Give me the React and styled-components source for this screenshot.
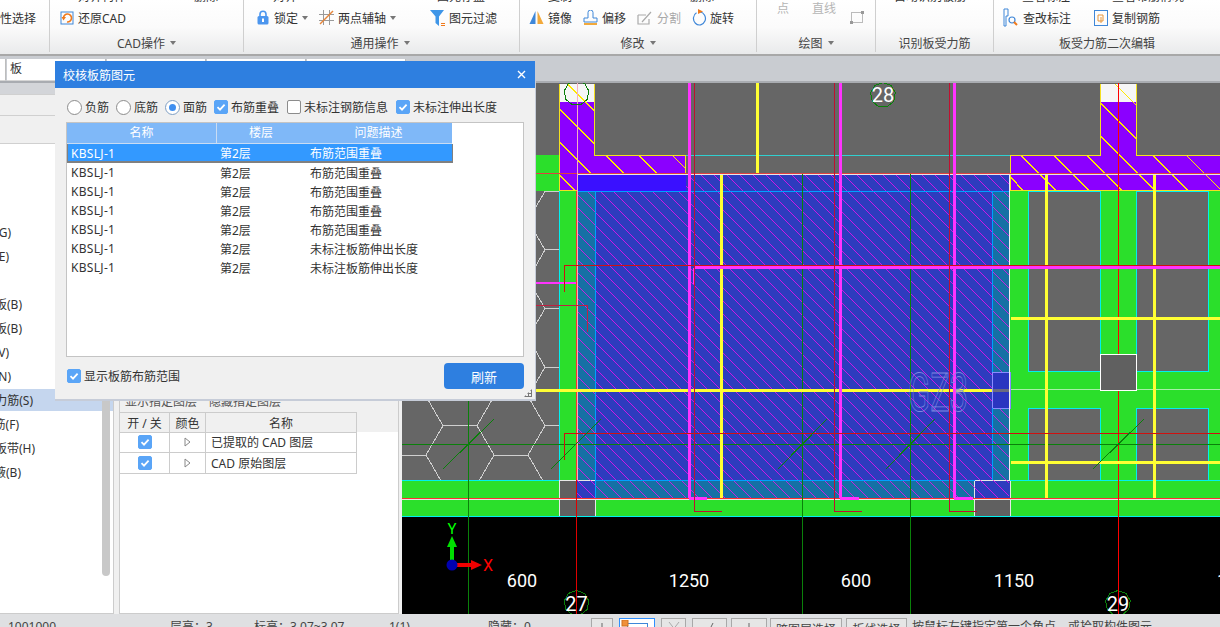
import React from "react";
import styled, { createGlobalStyle } from "styled-components";

const Global = createGlobalStyle`
  html, body { margin: 0; padding: 0; background: #f0f0f0; overflow: hidden; }
  * { box-sizing: border-box; }
  body { font-family: "Noto Sans", "Noto Sans CJK SC", sans-serif; font-size: 12px; color: #333; }
`;

const Page = styled.div`
  width: 1220px;
  height: 627px;
  overflow: hidden;
  position: relative;
  display: flex;
  flex-direction: column;
`;

/* ribbon */
const Ribbon = styled.div`
  height: 56px;
  display: flex;
  flex: none;
  background: linear-gradient(#ffffff, #fbfbfb 50%, #e9eaeb);
  border-bottom: 2px solid #a8a8a8;
`;

const Group = styled.div`
  width: ${(p) => p.$w}px;
  flex: none;
  height: 52px;
  display: flex;
  flex-direction: column;
  border-right: 1px solid #cfcfcf;
  &:last-child { border-right: 0; flex: 1; }
`;

const TopClip = styled.div`
  height: 3px;
  overflow: hidden;
  display: flex;
  flex: none;
  color: #444;
`;

const Clipped = styled.span`
  margin-left: ${(p) => p.$ml}px;
  margin-top: -9px;
  line-height: 12px;
  white-space: nowrap;
  color: ${(p) => p.$color || "#333"};
`;

const Tools = styled.div`
  height: 29px;
  flex: none;
  display: flex;
  align-items: center;
`;

const Tool = styled.div`
  margin-left: ${(p) => p.$ml}px;
  display: flex;
  align-items: center;
  gap: ${(p) => p.$gap ?? 4}px;
  white-space: nowrap;
  color: ${(p) => (p.$off ? "#a8a8a8" : "#333")};
`;

const Faint = styled.span`
  margin-left: ${(p) => p.$ml}px;
  margin-top: -19px;
  color: #b5b5b5;
`;

const Caret = styled.i`
  width: 0;
  height: 0;
  margin-left: ${(p) => p.$ml ?? 5}px;
  border-left: 3.5px solid transparent;
  border-right: 3.5px solid transparent;
  border-top: 4px solid #777;
`;

const GroupLabel = styled.div`
  flex: 1;
  display: flex;
  align-items: center;
  justify-content: center;
  padding-top: 2px;
  padding-right: ${(p) => p.$pr || 0}px;
  color: #444;
`;

/* input bar */
const SubBar = styled.div`
  height: 27px;
  flex: none;
  background: #c9ccd1;
  border-bottom: 2px solid #a9acb1;
  padding-top: 3px;
  display: flex;
  align-items: flex-start;
`;

const Cell = styled.div`
  width: ${(p) => p.$w}px;
  height: 22px;
  background: #fff;
  border-right: 1px solid #bdbdbd;
  border-bottom: 1px solid #d6d6d6;
  margin-right: ${(p) => p.$gap || 0}px;
  padding-left: 3px;
  line-height: 20px;
`;

/* main */
const Main = styled.div`
  height: 531px;
  flex: none;
  display: flex;
  background: #f0f0f0;
`;

const LeftPanel = styled.div`
  width: 114px;
  flex: none;
  background: #fff;
  border-right: 1px solid #ccc;
  border-bottom: 1px solid #ccc;
  overflow: hidden;
  position: relative;
`;

const Band = styled.div`
  height: ${(p) => p.$h}px;
  background: ${(p) => p.$bg};
  border-bottom: 1px solid #d0d0d0;
`;

const TreeList = styled.div`
  padding-top: 76px;
`;

const TreeRow = styled.div`
  height: ${(p) => (p.$sel ? 22 : 24)}px;
  margin: ${(p) => (p.$sel ? 1 : 0)}px 0;
  display: flex;
  justify-content: flex-end;
  align-items: center;
  width: ${(p) => (p.$sel ? 113 : p.$end)}px;
  padding-right: ${(p) => (p.$sel ? 113 - p.$end : 0)}px;
  white-space: nowrap;
  background: ${(p) => (p.$sel ? "#c5d6ee" : "transparent")};
  font-size: 12px;
  color: #333;
`;

const Scroll = styled.div`
  position: absolute;
  left: 102px;
  top: 130px;
  width: 8px;
  height: 363px;
  border-radius: 4px;
  background: #c8c8c8;
`;

const MidPanel = styled.div`
  width: 280px;
  margin-left: 5px;
  flex: none;
  background: #fff;
  border-left: 1px solid #ccc;
  border-right: 1px solid #ccc;
  border-bottom: 1px solid #ccc;
`;

const MidTop = styled.div`
  height: 349px;
  background: #f0f0f0;
  padding-top: 311px;
`;

const Caption = styled.div`
  height: 18px;
  line-height: 16px;
  padding-left: 5px;
  white-space: nowrap;
  color: #555;
`;

const LayerRow = styled.div`
  display: grid;
  grid-template-columns: 50px 36px 151px;
  height: ${(p) => p.$h || 21}px;
  width: 237px;
`;

const LayerCell = styled.div`
  display: flex;
  align-items: center;
  justify-content: ${(p) => (p.$left ? "flex-start" : "center")};
  padding-left: ${(p) => (p.$left ? 5 : 0)}px;
  border-right: 1px solid #ccc;
  border-top: ${(p) => (p.$head ? "1px solid #ccc" : 0)};
  border-bottom: 1px solid #ccc;
  white-space: pre;
`;

const Canvas = styled.div`
  margin-left: 3px;
  width: 818px;
  height: 531px;
  flex: none;
  background: #000;
`;

const DimText = styled.text`
  font-family: "Liberation Sans Narrow", "Roboto", sans-serif;
  font-size: ${(p) => p.$size || 18}px;
  fill: ${(p) => p.$fill || "#fff"};
  text-anchor: middle;
`;

/* status */
const Status = styled.div`
  flex: none;
  height: 13px;
  background: #dfe0e2;
  display: flex;
  overflow: hidden;
  position: relative;
  white-space: nowrap;
  color: #444;
`;

const StatusText = styled.span`
  flex: none;
  width: ${(p) => p.$w}px;
  margin-left: ${(p) => p.$ml || 0}px;
  margin-top: 3px;
  line-height: 20px;
`;

const StatusBtn = styled.div`
  width: ${(p) => p.$w}px;
  margin-left: ${(p) => p.$ml}px;
  margin-top: 4px;
  height: 20px;
  flex: none;
  background: ${(p) => (p.$on ? "#fff" : "#e6e6e6")};
  border: 1px solid ${(p) => (p.$on ? "#2e8fff" : "#a9a9a9")};
  text-align: center;
  line-height: 18px;
  padding-top: 2px;
  color: #444;
  display: flex;
  justify-content: center;
`;

/* dialog */
const Dialog = styled.div`
  position: absolute;
  left: 55px;
  top: 61px;
  width: 481px;
  height: 340px;
  background: #f0f0f0;
  border-right: 1px solid #c6ccd8;
  border-bottom: 2px solid #c6ccd8;
  display: flex;
  flex-direction: column;
`;

const TitleBar = styled.div`
  height: 27px;
  flex: none;
  background: #2e7fe0;
  color: #fff;
  display: flex;
  align-items: center;
  justify-content: space-between;
  padding: 0 9px 0 8px;
`;

const Options = styled.div`
  height: 34px;
  flex: none;
  display: flex;
  align-items: center;
  padding: 4px 0 0 12px;
`;

const Option = styled.label`
  display: flex;
  align-items: center;
  gap: 3px;
  margin-right: ${(p) => p.$mr}px;
  white-space: nowrap;
`;

const Radio = styled.span`
  width: 15px;
  height: 15px;
  flex: none;
  border-radius: 50%;
  background: #fff;
  border: 1px solid ${(p) => (p.$on ? "#7f9fc4" : "#8c8c8c")};
  display: flex;
  align-items: center;
  justify-content: center;
  &::after {
    content: "";
    width: 7px;
    height: 7px;
    border-radius: 50%;
    background: ${(p) => (p.$on ? "#3f8ff0" : "transparent")};
  }
`;

const CheckBox = styled.span`
  width: 14px;
  height: 14px;
  flex: none;
  border-radius: 2px;
  background: ${(p) => (p.$on ? "#5aa5f7" : "#fff")};
  border: 1px solid ${(p) => (p.$on ? "#5aa5f7" : "#8c8c8c")};
  display: flex;
  align-items: center;
  justify-content: center;
`;

const TableBox = styled.div`
  margin: 0 11px 0 11px;
  height: 235px;
  flex: none;
  background: #fff;
  border: 1px solid #c4c4c4;
`;

const HeadRow = styled.div`
  width: 385px;
  height: 21px;
  display: grid;
  grid-template-columns: 150px 88px 147px;
  background: #7fb8f8;
  color: #fff;
  border-bottom: 1px solid #c9dcf3;
`;

const HeadCell = styled.div`
  text-align: center;
  line-height: 20px;
  border-right: ${(p) => (p.$sep ? "1px solid #c9dcf3" : 0)};
`;

const DataRow = styled.div`
  width: ${(p) => (p.$sel ? 386 : 385)}px;
  height: 19px;
  display: grid;
  grid-template-columns: 149px 90px 146px;
  align-items: center;
  padding-left: ${(p) => (p.$sel ? 3 : 4)}px;
  background: ${(p) => (p.$sel ? "#3399ff" : "transparent")};
  color: ${(p) => (p.$sel ? "#fff" : "#333")};
  border-left: ${(p) => (p.$sel ? "1px solid #808080" : 0)};
  border-right: ${(p) => (p.$sel ? "1px solid #808080" : 0)};
  border-bottom: ${(p) => (p.$sel ? "2px solid #808080" : 0)};
`;

const PartName = styled.span`
  letter-spacing: 0.3px;
`;

const Footer = styled.div`
  flex: 1;
  display: flex;
  justify-content: space-between;
  align-items: center;
  padding: 0 11px 4px 12px;
`;

const Refresh = styled.button`
  width: 80px;
  height: 26px;
  border: 0;
  border-radius: 4px;
  background: #2e7fe0;
  color: #fff;
  font: inherit;
  font-size: 13px;
`;

const Grip = styled.div`
  position: absolute;
  right: 3px;
  bottom: 2px;
  width: 8px;
  height: 8px;
  background:
    radial-gradient(circle, #777 1px, transparent 1.2px) 0 0 / 3px 3px;
  clip-path: polygon(100% 0, 100% 100%, 0 100%);
`;

/* small ribbon icons */
const Tick = () => (
  <svg width="10" height="10" viewBox="0 0 10 10">
    <path d="M1.5 5.2 L4 7.6 L8.6 2.6" fill="none" stroke="#fff" strokeWidth="1.8" />
  </svg>
);

const RestoreIcon = () => (
  <svg width="14" height="14" viewBox="0 0 14 14">
    <rect x="1" y="1" width="12" height="12" fill="none" stroke="#3f87d8" />
    <path d="M3.5 7 A4 4 0 1 1 7 11" fill="none" stroke="#f07a1c" strokeWidth="1.6" />
    <path d="M1.5 6 L6 6 L3.5 9.5 Z" fill="#f07a1c" />
  </svg>
);
const LockIcon = () => (
  <svg width="12" height="15" viewBox="0 0 12 15">
    <path d="M3 7 V4.2 A3 3 0 0 1 9 4.2 V7" fill="none" stroke="#4c96ee" strokeWidth="1.6" />
    <rect x="0.5" y="6" width="11" height="8.5" rx="1.5" fill="#4c96ee" />
    <rect x="5" y="8.5" width="2" height="3.5" fill="#fff" />
  </svg>
);
const AxisIcon = () => (
  <svg width="15" height="15" viewBox="0 0 15 15">
    <path d="M4.5 0 V15 M10.5 0 V15 M0 4.5 H15 M0 10.5 H15" stroke="#9a9a9a" />
    <path d="M1 14 L14 1" stroke="#e8863a" strokeWidth="1.4" />
  </svg>
);
const FilterIcon = () => (
  <svg width="17" height="16" viewBox="0 0 17 16">
    <path d="M0 0 H14 L9 6.5 V16 L5.5 13 V6.5 Z" fill="#3f96e8" />
    <path d="M11 13.5 H15 M11 15.5 H15" stroke="#f07a1c" />
  </svg>
);
const MirrorIcon = () => (
  <svg width="15" height="15" viewBox="0 0 15 15">
    <path d="M6.5 1 V14 H0.5 Z" fill="#3f87d8" />
    <path d="M8.5 1 V14 H14.5 Z" fill="#f2a93b" />
  </svg>
);
const OffsetIcon = () => (
  <svg width="15" height="15" viewBox="0 0 15 15">
    <path d="M5 1.5 A2.5 2.5 0 0 1 10 1.5 V7 H14 V11 H1 V7 H5 Z" transform="translate(0 1)" fill="none" stroke="#3f87d8" />
    <path d="M1 14 H14" stroke="#f2a93b" strokeWidth="2" />
  </svg>
);
const SplitIcon = () => (
  <svg width="16" height="15" viewBox="0 0 16 15">
    <path d="M1 5 H9 M1 5 V14 H12 V9 M5 12 L14 2" fill="none" stroke="#aaa" strokeWidth="1.2" />
  </svg>
);
const RotateIcon = () => (
  <svg width="15" height="17" viewBox="0 0 15 17">
    <path d="M8 3 A6 6.5 0 1 1 4.5 3.8" fill="none" stroke="#3f87d8" strokeWidth="1.2" />
    <path d="M6 0 L11 2.5 L6 5 Z" fill="#f07a1c" />
  </svg>
);
const QueryIcon = () => (
  <svg width="16" height="19" viewBox="0 0 16 19">
    <path d="M1 1 H5 V8 H3 V18 H1 Z" fill="none" stroke="#3f87d8" />
    <circle cx="9" cy="12" r="3" fill="none" stroke="#3f87d8" strokeWidth="1.2" />
    <path d="M11 14 L14 17" stroke="#f07a1c" strokeWidth="2" />
  </svg>
);
const CopyBarIcon = () => (
  <svg width="14" height="16" viewBox="0 0 14 16">
    <rect x="0.5" y="0.5" width="13" height="15" fill="none" stroke="#3f87d8" />
    <path d="M4 5 H9 V11 H4 Z M7 7 V13" fill="none" stroke="#e8963a" />
  </svg>
);
const RectIcon = () => (
  <svg width="14" height="13" viewBox="0 0 14 13">
    <rect x="1.5" y="1.5" width="11" height="10" fill="none" stroke="#bbb" />
    <path d="M0 10 H3 V13 H0 Z M11 0 H14 V3 H11 Z" fill="#999" />
  </svg>
);
const PlayIcon = () => (
  <svg width="7" height="10" viewBox="0 0 7 10">
    <path d="M1 1 L6 5 L1 9 Z" fill="#fff" stroke="#888" />
  </svg>
);
const CloseIcon = () => (
  <svg width="9" height="9" viewBox="0 0 9 9">
    <path d="M1 1 L8 8 M8 1 L1 8" stroke="#fff" strokeWidth="1.4" />
  </svg>
);
const ModeIcon = ({ d, c = "#666" }) => (
  <svg width="14" height="14" viewBox="0 0 14 14">
    <path d={d} fill="none" stroke={c} />
  </svg>
);
const PickIcon = () => (
  <svg width="32" height="12" viewBox="0 0 32 12" style={{ marginTop: -1 }}>
    <rect x="6.5" y="3.5" width="20" height="12" fill="none" stroke="#3f87d8" />
    <rect x="1" y="0" width="6" height="6" fill="#f0903a" stroke="#d07020" />
  </svg>
);

/* cad drawing helpers */
const hexPath = () => {
  const s = 34;
  const h = 29.3;
  let d = "";
  for (let c = -2; c < 6; c++) {
    for (let r = -8; r < 3; r++) {
      const cx = 460 + c * 51;
      const cy = 455 + r * 2 * h + (c % 2 !== 0 ? h : 0);
      d += `M${cx - s} ${cy} L${cx - s / 2} ${cy - h} L${cx + s / 2} ${cy - h} L${cx + s} ${cy} L${cx + s / 2} ${cy + h} L${cx - s / 2} ${cy + h} Z `;
    }
  }
  return d;
};

// 45 degree hatch: lines y - x = base + k, k stepping through from..to
const hatchPath = (base, step, top, bottom, from, to) => {
  let d = "";
  for (let k = from; k <= to; k += step) {
    const c = base + k;
    d += `M${top - c} ${top} L${bottom - c} ${bottom} `;
  }
  return d;
};

const ringPoints = (cx, cy) => {
  const pts = [];
  for (let i = 0; i < 9; i++) {
    const a = (i / 9) * Math.PI * 2 - Math.PI / 2;
    pts.push(`${(cx + 12.5 * Math.cos(a)).toFixed(1)},${(cy + 12.5 * Math.sin(a)).toFixed(1)}`);
  }
  return pts.join(" ");
};

const Ln = ({ x1, y1, x2, y2, c, w = 1 }) => <line x1={x1} y1={y1} x2={x2} y2={y2} stroke={c} strokeWidth={w} />;

const GREEN = "#2bdf2b";
const GRAY = "#666666";
const CYAN = "#00f0f0";
const RED = "#e00000";
const PINK = "#ff33ff";
const YEL = "#ffff33";
const DG = "#0a800a";

const CadDrawing = () => (
  <svg width="818" height="531" viewBox="402 83 818 531" shapeRendering="crispEdges" style={{ display: "block" }}>
    <defs>
      <clipPath id="hexClip">
        <rect x="402" y="191" width="157" height="289" />
      </clipPath>
      <clipPath id="magClip">
        <path d="M686 174 H1009 V498 H577 V191 H686 Z" />
      </clipPath>
      <clipPath id="yelLeft">
        <path d="M559 84 H595 V155 H686 V174 H577 V191 H559 Z" />
      </clipPath>
      <clipPath id="yelRight">
        <path d="M1010 155 H1100.5 V84 H1136.5 V155 H1220 V191 H1010 Z" />
      </clipPath>
    </defs>

    <rect x="402" y="83" width="818" height="434" fill={GRAY} />
    <rect x="402" y="517" width="818" height="97" fill="#000" />

    {/* green slabs */}
    <rect x="402" y="155" width="157" height="36" fill={GREEN} />
    <rect x="559" y="191" width="18" height="289" fill={GREEN} />
    <rect x="1010" y="191" width="210" height="325" fill={GREEN} />
    <rect x="402" y="480" width="818" height="37" fill={GREEN} />

    {/* hex infill */}
    <path d={hexPath()} fill="none" stroke="#cfcfcf" clipPath="url(#hexClip)" />

    {/* openings on the right */}
    <rect x="1028.5" y="191.5" width="72" height="180" fill={GRAY} stroke={CYAN} />
    <rect x="1136.5" y="191.5" width="72" height="180" fill={GRAY} stroke={CYAN} />
    <rect x="1028.5" y="408.5" width="72" height="72" fill={GRAY} stroke={CYAN} />
    <rect x="1136.5" y="408.5" width="72" height="72" fill={GRAY} stroke={CYAN} />
    <Ln x1="1010" y1="389.5" x2="1100" y2="389.5" c="#a8f0a8" />
    <Ln x1="1136" y1="389.5" x2="1220" y2="389.5" c="#a8f0a8" />

    {/* rebar range overlay */}
    <rect x="577" y="191" width="432" height="307" fill="#1570a5" />
    <rect x="595" y="191" width="397" height="289" fill="#2d3cbe" />
    <rect x="686" y="174" width="323" height="17" fill="#2d3cbe" />

    {/* columns */}
    <rect x="559" y="480.5" width="36" height="36" fill="#606060" stroke="#e8e8e8" />
    <rect x="974.5" y="480.5" width="36" height="36" fill="#606060" stroke="#e8e8e8" />
    <rect x="577" y="481" width="18" height="17" fill="#2d3cbe" />
    <rect x="975" y="481" width="35" height="17" fill="#2d3cbe" />
    <rect x="1100.5" y="354.5" width="36" height="36" fill="#606060" stroke="#fff" />

    {/* purple slab edge */}
    <rect x="559" y="84" width="36" height="18" fill="#f6f6f6" />
    <rect x="1101" y="84" width="36" height="18" fill="#f6f6f6" />
    <path d="M559 102 H595 V155 H686 V191 H559 Z" fill="#8b00ff" />
    <path d="M577 174 H686 V191 H577 Z" fill="#3a10ff" />
    <path d="M1010 155 H1100.5 V102 H1136.5 V155 H1220 V191 H1010 Z" fill="#8b00ff" />
    <path d={hatchPath(-451, 33, 84, 191, -99, 66)} stroke="#ffe800" strokeWidth="1.4" fill="none" clipPath="url(#yelLeft)" />
    <path d={hatchPath(-866, 33, 84, 191, -264, 99)} stroke="#ffe800" strokeWidth="1.4" fill="none" clipPath="url(#yelRight)" />
    <path d="M559.5 84 V190.5 H577 M685.5 174 V155.5 H594.5 V84" fill="none" stroke="#f4e020" />
    <path d="M1010.5 190.5 V155.5 H1100.5 V84 M1136.5 84 V155.5 H1220 M1010 190.5 H1220" fill="none" stroke="#f4e020" />

    {/* hatch */}
    <path d={hatchPath(-201, 13, 174, 498, -650, 130)} stroke="#f010f0" strokeWidth="0.8" fill="none" clipPath="url(#magClip)" />

    <rect x="992.5" y="372.5" width="18" height="36" fill="#2a35c0" stroke="#8a8aff" />
    <Ln x1="993" y1="390" x2="1010" y2="390" c="#6a6a80" w={3} />

    {/* outlines */}
    <Ln x1="686" y1="155.5" x2="1010" y2="155.5" c="#30d0d0" />
    <Ln x1="577" y1="191.5" x2="1010" y2="191.5" c="#00a0ff" />
    <Ln x1="559.5" y1="191" x2="559.5" y2="480" c={CYAN} />
    <Ln x1="595.5" y1="191" x2="595.5" y2="498" c="#00a0ff" />
    <Ln x1="992.5" y1="191" x2="992.5" y2="372" c="#00a0ff" />
    <Ln x1="992.5" y1="408" x2="992.5" y2="480" c="#00a0ff" />
    <Ln x1="1009.5" y1="174" x2="1009.5" y2="480" c="#f0f0f0" />
    <Ln x1="402" y1="480.5" x2="559" y2="480.5" c={CYAN} />
    <Ln x1="595" y1="480.5" x2="975" y2="480.5" c="#00a0ff" />
    <Ln x1="1010" y1="480.5" x2="1220" y2="480.5" c={CYAN} />
    <Ln x1="402" y1="516.5" x2="1220" y2="516.5" c={CYAN} />

    {/* axis lines */}
    <Ln x1="402" y1="173.5" x2="1220" y2="173.5" c="#e04040" />
    <Ln x1="577" y1="174.5" x2="1220" y2="174.5" c="#e8e8e8" />
    <Ln x1="402" y1="498.5" x2="1220" y2="498.5" c="#ff3030" />
    <Ln x1="402" y1="499.5" x2="1220" y2="499.5" c="#e8e8e8" />

    <Ln x1="468.5" y1="191" x2="468.5" y2="614" c={DG} />
    <Ln x1="802.5" y1="174" x2="802.5" y2="614" c={DG} />
    <Ln x1="910.5" y1="174" x2="910.5" y2="614" c={DG} />
    <Ln x1="402" y1="444.5" x2="1220" y2="444.5" c={DG} />

    <Ln x1="577.5" y1="83" x2="577.5" y2="480" c="#f4b0c0" />
    <Ln x1="576.5" y1="191" x2="576.5" y2="480" c="#ff3030" />
    <Ln x1="576.5" y1="480" x2="576.5" y2="614" c={RED} />
    <Ln x1="1118" y1="83" x2="1118" y2="354" c="#f00" w={1} />
    <Ln x1="1118" y1="391" x2="1118" y2="614" c="#f00" w={1} />

    {/* bars */}
    <Ln x1="536" y1="390" x2="992" y2="390" c={YEL} w={3} />
    <Ln x1="1011" y1="318" x2="1220" y2="318" c={YEL} w={3} />
    <Ln x1="1011" y1="462" x2="1220" y2="462" c={YEL} w={3} />
    <Ln x1="757.5" y1="83" x2="757.5" y2="173" c={YEL} w={3} />
    <Ln x1="721.5" y1="175" x2="721.5" y2="498" c={YEL} w={3} />
    <Ln x1="1046.5" y1="175" x2="1046.5" y2="498" c={YEL} w={3} />
    <Ln x1="1154.5" y1="175" x2="1154.5" y2="498" c={YEL} w={3} />

    <Ln x1="689.5" y1="83" x2="689.5" y2="498" c={PINK} w={3} />
    <Ln x1="840.5" y1="83" x2="840.5" y2="498" c={PINK} w={3} />
    <Ln x1="954.5" y1="83" x2="954.5" y2="498" c={PINK} w={3} />
    <Ln x1="689" y1="498" x2="707" y2="498" c={PINK} w={3} />
    <Ln x1="840" y1="498" x2="859" y2="498" c={PINK} w={3} />
    <Ln x1="954" y1="498" x2="973" y2="498" c={PINK} w={3} />
    <Ln x1="694" y1="267" x2="1220" y2="267" c={PINK} w={3} />
    <Ln x1="536" y1="282.5" x2="576" y2="282.5" c={PINK} w={2} />
    <Ln x1="694" y1="268" x2="694" y2="284" c={PINK} w={2} />

    {/* red bent bars */}
    <path d="M564.5 292 V265.5 H1220" fill="none" stroke="#d01010" />
    <path d="M564.5 460 V433.5 H1220" fill="none" stroke="#d01010" />
    <path d="M536 305.5 H587.5 V332" fill="none" stroke="#c02040" />
    <path d="M694.5 83 V511.5 H722" fill="none" stroke="#c01030" />
    <path d="M834.5 83 V511.5 H862" fill="none" stroke="#c01030" />
    <path d="M949.5 83 V511.5 H977" fill="none" stroke="#c01030" />

    {/* diagonal ticks */}
    <Ln x1="443" y1="469" x2="494" y2="419" c={DG} />
    <Ln x1="551" y1="469" x2="601" y2="419" c={DG} />
    <Ln x1="778" y1="469" x2="827" y2="419" c={DG} />
    <Ln x1="886" y1="469" x2="935" y2="419" c={DG} />
    <Ln x1="1093" y1="469" x2="1144" y2="419" c={DG} />

    {/* axis bubbles */}
    <polygon points={ringPoints(576.5, 93)} fill="none" stroke={DG} />
    <polygon points={ringPoints(883, 95)} fill={GRAY} stroke={DG} />
    <polygon points={ringPoints(576.5, 603)} fill="#000" stroke={DG} />
    <polygon points={ringPoints(1118, 603)} fill="#000" stroke={DG} />
    <Ln x1="576.5" y1="590" x2="576.5" y2="614" c={RED} />
    <Ln x1="1118" y1="590" x2="1118" y2="614" c="#f00" />
    <g shapeRendering="auto">
      <DimText x="883" y="102" $size={20}>28</DimText>
      <DimText x="576.5" y="611" $size={20}>27</DimText>
      <DimText x="1118" y="611" $size={20}>29</DimText>
      <DimText x="522" y="587">600</DimText>
      <DimText x="689" y="587">1250</DimText>
      <DimText x="856" y="587">600</DimText>
      <DimText x="1014" y="587">1150</DimText>
      <DimText x="1222" y="587">1</DimText>
      <text x="908" y="411" fontFamily="Liberation Sans Narrow, Roboto, sans-serif" fontSize="54" fill="none" stroke="#8088e0" strokeWidth="0.8" textLength="60" lengthAdjust="spacingAndGlyphs">GZ3</text>
      <DimText x="452" y="534" $size={15} $fill="#00ff00">Y</DimText>
      <DimText x="488" y="571" $size={16} $fill="#ff0000">X</DimText>
    </g>

    {/* ucs */}
    <rect x="450" y="546" width="4" height="20" fill="#00e000" />
    <path d="M452 536 L457 547 H447 Z" fill="#00e000" shapeRendering="auto" />
    <rect x="452" y="563" width="20" height="4" fill="#f00000" />
    <path d="M482 565 L471 560 V570 Z" fill="#f00000" shapeRendering="auto" />
    <circle cx="452" cy="565" r="5.5" fill="#0000b0" shapeRendering="auto" />
  </svg>
);

const rows = [
  ["KBSLJ-1", "第2层", "布筋范围重叠"],
  ["KBSLJ-1", "第2层", "布筋范围重叠"],
  ["KBSLJ-1", "第2层", "布筋范围重叠"],
  ["KBSLJ-1", "第2层", "布筋范围重叠"],
  ["KBSLJ-1", "第2层", "布筋范围重叠"],
  ["KBSLJ-1", "第2层", "未标注板筋伸出长度"],
  ["KBSLJ-1", "第2层", "未标注板筋伸出长度"],
];

const tree = [
  { text: "砌体加筋(G)", end: 11 },
  { text: "圈梁(E)", end: 9 },
  { text: "", end: 1 },
  { text: "现浇板(B)", end: 22 },
  { text: "螺旋板(B)", end: 22 },
  { text: "柱帽(V)", end: 9 },
  { text: "板洞(N)", end: 11 },
  { text: "板受力筋(S)", end: 33, sel: true },
  { text: "板负筋(F)", end: 19 },
  { text: "楼层板带(H)", end: 35 },
  { text: "板加腋(B)", end: 21 },
];

export default function App() {
  return (
    <Page>
      <Global />
      <Ribbon>
        <Group $w={50}>
          <TopClip />
          <Tools>
            <Tool $ml={-12}>属性选择</Tool>
          </Tools>
        </Group>
        <Group $w={194}>
          <TopClip>
            <Clipped $ml={28}>对齐构件</Clipped>
            <Clipped $ml={24} $color="#e8a070">▪</Clipped>
            <Clipped $ml={32}>删除</Clipped>
          </TopClip>
          <Tools>
            <Tool $ml={10} $gap={4}><RestoreIcon />还原CAD</Tool>
          </Tools>
          <GroupLabel>CAD操作<Caret /></GroupLabel>
        </Group>
        <Group $w={276}>
          <TopClip>
            <Clipped $ml={29}>对齐</Clipped>
            <Clipped $ml={140}>图元存盘</Clipped>
          </TopClip>
          <Tools>
            <Tool $ml={13} $gap={5}><LockIcon />锁定<Caret $ml={-1} /></Tool>
            <Tool $ml={11}><AxisIcon />两点辅轴<Caret $ml={0} /></Tool>
            <Tool $ml={34} $gap={2}><FilterIcon />图元过滤</Tool>
          </Tools>
          <GroupLabel $pr={3}>通用操作<Caret /></GroupLabel>
        </Group>
        <Group $w={237}>
          <TopClip>
            <Clipped $ml={28}>复制</Clipped>
            <Clipped $ml={118}>删除</Clipped>
          </TopClip>
          <Tools>
            <Tool $ml={9}><MirrorIcon />镜像</Tool>
            <Tool $ml={11}><OffsetIcon />偏移</Tool>
            <Tool $ml={11} $off><SplitIcon />分割</Tool>
            <Tool $ml={11} $gap={3}><RotateIcon />旋转</Tool>
          </Tools>
          <GroupLabel>修改<Caret /></GroupLabel>
        </Group>
        <Group $w={119}>
          <TopClip />
          <Tools>
            <Faint $ml={20}>点</Faint>
            <Faint $ml={23}>直线</Faint>
            <Tool $ml={14}><RectIcon /></Tool>
          </Tools>
          <GroupLabel>绘图<Caret /></GroupLabel>
        </Group>
        <Group $w={118}>
          <TopClip>
            <Clipped $ml={18}>自动识别板筋</Clipped>
          </TopClip>
          <Tools />
          <GroupLabel>识别板受力筋</GroupLabel>
        </Group>
        <Group $w={226}>
          <TopClip>
            <Clipped $ml={28}>查看标注</Clipped>
            <Clipped $ml={42}>查看布筋情况</Clipped>
          </TopClip>
          <Tools>
            <Tool $ml={9}><QueryIcon />查改标注</Tool>
            <Tool $ml={23}><CopyBarIcon />复制钢筋</Tool>
          </Tools>
          <GroupLabel>板受力筋二次编辑</GroupLabel>
        </Group>
      </Ribbon>

      <SubBar>
        <Cell $w={6} $gap={1} />
        <Cell $w={99} $gap={1}>板</Cell>
        <Cell $w={99} $gap={1} />
        <Cell $w={99} $gap={1} />
        <Cell $w={99} />
      </SubBar>

      <Main>
        <LeftPanel>
          <Band $h={12} $bg="#d3d5d9" />
          <Band $h={21} $bg="#f0f0f0" />
          <Band $h={28} $bg="#f0f0f0" />
          <TreeList>
            {tree.map((t, i) => (
              <TreeRow key={i} $end={t.end} $sel={t.sel}>{t.text}</TreeRow>
            ))}
          </TreeList>
          <Scroll />
        </LeftPanel>
        <MidPanel>
          <MidTop>
            <Caption>显示指定图层　隐藏指定图层</Caption>
            <LayerRow>
              <LayerCell $head>开 / 关</LayerCell>
              <LayerCell $head>颜色</LayerCell>
              <LayerCell $head>名称</LayerCell>
            </LayerRow>
          </MidTop>
          <LayerRow>
            <LayerCell><CheckBox $on><Tick /></CheckBox></LayerCell>
            <LayerCell><PlayIcon /></LayerCell>
            <LayerCell $left>已提取的 CAD 图层</LayerCell>
          </LayerRow>
          <LayerRow>
            <LayerCell><CheckBox $on><Tick /></CheckBox></LayerCell>
            <LayerCell><PlayIcon /></LayerCell>
            <LayerCell $left>CAD 原始图层</LayerCell>
          </LayerRow>
        </MidPanel>
        <Canvas>
          <CadDrawing />
        </Canvas>
      </Main>

      <Status>
        <StatusText $ml={8} $w={162}>1001000</StatusText>
        <StatusText $w={84}>层高：3</StatusText>
        <StatusText $w={135}>标高：3.07~3.07</StatusText>
        <StatusText $w={99}>1(1)</StatusText>
        <StatusText $w={103}>隐藏：0</StatusText>
        <StatusBtn $w={22} $ml={0}><ModeIcon d="M7 2 V14" /></StatusBtn>
        <StatusBtn $w={36} $ml={6} $on><PickIcon /></StatusBtn>
        <StatusBtn $w={25} $ml={6}><ModeIcon d="M2 1 L12 14 M12 1 L2 14" c="#aaa" /></StatusBtn>
        <StatusBtn $w={35} $ml={6}><ModeIcon d="M10 2 L4 14" /></StatusBtn>
        <StatusBtn $w={36} $ml={4}><ModeIcon d="M7 2 V14" /></StatusBtn>
        <StatusBtn $w={72} $ml={3}>跨图层选择</StatusBtn>
        <StatusBtn $w={61} $ml={4}>折线选择</StatusBtn>
        <StatusText $ml={5} $w={300}>按鼠标左键指定第一个角点，或拾取构件图元</StatusText>
      </Status>

      <Dialog>
        <TitleBar>
          校核板筋图元
          <CloseIcon />
        </TitleBar>
        <Options>
          <Option $mr={7}><Radio />负筋</Option>
          <Option $mr={7}><Radio />底筋</Option>
          <Option $mr={7}><Radio $on />面筋</Option>
          <Option $mr={8}><CheckBox $on><Tick /></CheckBox>布筋重叠</Option>
          <Option $mr={8}><CheckBox />未标注钢筋信息</Option>
          <Option $mr={0}><CheckBox $on><Tick /></CheckBox>未标注伸出长度</Option>
        </Options>
        <TableBox>
          <HeadRow>
            <HeadCell $sep>名称</HeadCell>
            <HeadCell>楼层</HeadCell>
            <HeadCell>问题描述</HeadCell>
          </HeadRow>
          {rows.map((r, i) => (
            <DataRow key={i} $sel={i === 0}>
              <PartName>{r[0]}</PartName>
              <span>{r[1]}</span>
              <span>{r[2]}</span>
            </DataRow>
          ))}
        </TableBox>
        <Footer>
          <Option $mr={0}><CheckBox $on><Tick /></CheckBox>显示板筋布筋范围</Option>
          <Refresh>刷新</Refresh>
        </Footer>
        <Grip />
      </Dialog>
    </Page>
  );
}
